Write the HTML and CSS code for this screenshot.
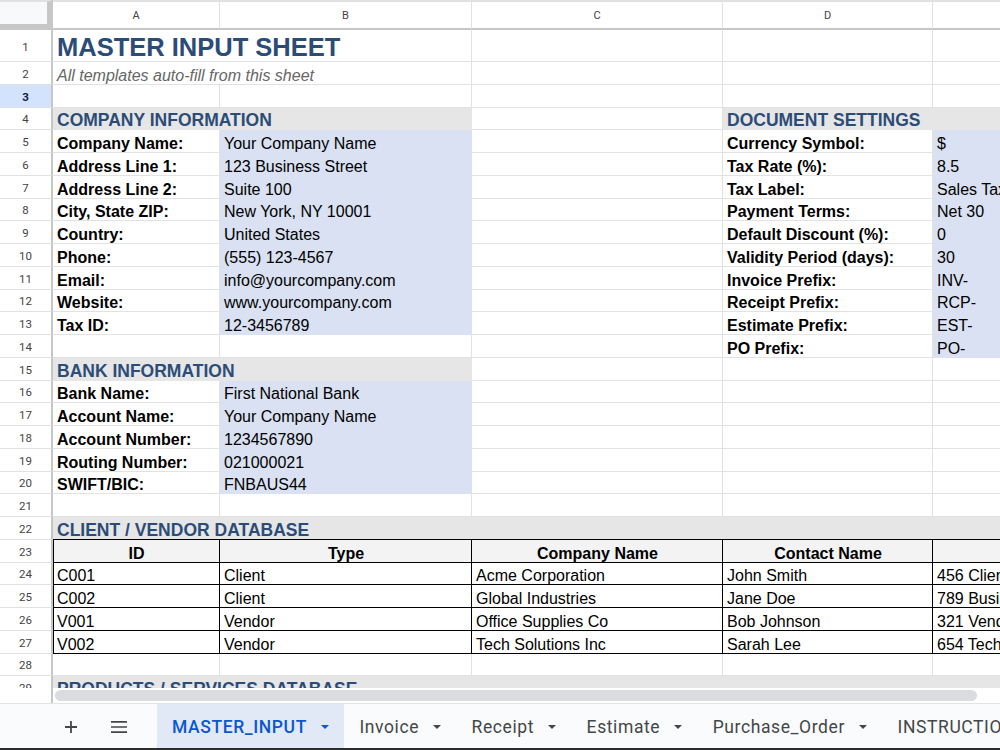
FILE: index.html
```html
<!DOCTYPE html>
<html lang="en">
<head>
  <meta charset="UTF-8">
  <title>MASTER_INPUT</title>
  <link rel="stylesheet" href="styles.css">
</head>
<body>
  <div class="app">
    <div class="sheet">
      <div class="row hdr">
        <div class="corner"></div>
        <div class="ch">A</div><div class="ch">B</div><div class="ch">C</div><div class="ch">D</div><div class="ch"></div>
      </div>
      <div class="row r1">
        <div class="rh">1</div>
        <div class="c span2 title">MASTER INPUT SHEET</div>
        <div class="c"></div><div class="c"></div><div class="c"></div>
      </div>
      <div class="row">
        <div class="rh">2</div>
        <div class="c span2 sub">All templates auto-fill from this sheet</div>
        <div class="c"></div><div class="c"></div><div class="c"></div>
      </div>
      <div class="row">
        <div class="rh sel">3</div>
        <div class="c"></div><div class="c"></div><div class="c"></div><div class="c"></div><div class="c"></div>
      </div>
      <div class="row">
        <div class="rh">4</div>
        <div class="c span2 sec">COMPANY INFORMATION</div>
        <div class="c"></div>
        <div class="c span2 sec">DOCUMENT SETTINGS</div>
      </div>
      <div class="row">
        <div class="rh">5</div>
        <div class="c lbl">Company Name:</div><div class="c val">Your Company Name</div><div class="c"></div>
        <div class="c lbl">Currency Symbol:</div><div class="c val">$</div>
      </div>
      <div class="row">
        <div class="rh">6</div>
        <div class="c lbl">Address Line 1:</div><div class="c val">123 Business Street</div><div class="c"></div>
        <div class="c lbl">Tax Rate (%):</div><div class="c val">8.5</div>
      </div>
      <div class="row">
        <div class="rh">7</div>
        <div class="c lbl">Address Line 2:</div><div class="c val">Suite 100</div><div class="c"></div>
        <div class="c lbl">Tax Label:</div><div class="c val">Sales Tax</div>
      </div>
      <div class="row">
        <div class="rh">8</div>
        <div class="c lbl">City, State ZIP:</div><div class="c val">New York, NY 10001</div><div class="c"></div>
        <div class="c lbl">Payment Terms:</div><div class="c val">Net 30</div>
      </div>
      <div class="row">
        <div class="rh">9</div>
        <div class="c lbl">Country:</div><div class="c val">United States</div><div class="c"></div>
        <div class="c lbl">Default Discount (%):</div><div class="c val">0</div>
      </div>
      <div class="row">
        <div class="rh">10</div>
        <div class="c lbl">Phone:</div><div class="c val">(555) 123-4567</div><div class="c"></div>
        <div class="c lbl">Validity Period (days):</div><div class="c val">30</div>
      </div>
      <div class="row">
        <div class="rh">11</div>
        <div class="c lbl">Email:</div><div class="c val">info@yourcompany.com</div><div class="c"></div>
        <div class="c lbl">Invoice Prefix:</div><div class="c val">INV-</div>
      </div>
      <div class="row">
        <div class="rh">12</div>
        <div class="c lbl">Website:</div><div class="c val">www.yourcompany.com</div><div class="c"></div>
        <div class="c lbl">Receipt Prefix:</div><div class="c val">RCP-</div>
      </div>
      <div class="row">
        <div class="rh">13</div>
        <div class="c lbl">Tax ID:</div><div class="c val">12-3456789</div><div class="c"></div>
        <div class="c lbl">Estimate Prefix:</div><div class="c val">EST-</div>
      </div>
      <div class="row">
        <div class="rh">14</div>
        <div class="c"></div><div class="c"></div><div class="c"></div>
        <div class="c lbl">PO Prefix:</div><div class="c val">PO-</div>
      </div>
      <div class="row">
        <div class="rh">15</div>
        <div class="c span2 sec">BANK INFORMATION</div>
        <div class="c"></div><div class="c"></div><div class="c"></div>
      </div>
      <div class="row">
        <div class="rh">16</div>
        <div class="c lbl">Bank Name:</div><div class="c val">First National Bank</div>
        <div class="c"></div><div class="c"></div><div class="c"></div>
      </div>
      <div class="row">
        <div class="rh">17</div>
        <div class="c lbl">Account Name:</div><div class="c val">Your Company Name</div>
        <div class="c"></div><div class="c"></div><div class="c"></div>
      </div>
      <div class="row">
        <div class="rh">18</div>
        <div class="c lbl">Account Number:</div><div class="c val">1234567890</div>
        <div class="c"></div><div class="c"></div><div class="c"></div>
      </div>
      <div class="row">
        <div class="rh">19</div>
        <div class="c lbl">Routing Number:</div><div class="c val">021000021</div>
        <div class="c"></div><div class="c"></div><div class="c"></div>
      </div>
      <div class="row">
        <div class="rh">20</div>
        <div class="c lbl">SWIFT/BIC:</div><div class="c val">FNBAUS44</div>
        <div class="c"></div><div class="c"></div><div class="c"></div>
      </div>
      <div class="row">
        <div class="rh">21</div>
        <div class="c"></div><div class="c"></div><div class="c"></div><div class="c"></div><div class="c"></div>
      </div>
      <div class="row">
        <div class="rh">22</div>
        <div class="c span5 sec tbl-top">CLIENT / VENDOR DATABASE</div>
      </div>
      <div class="row">
        <div class="rh">23</div>
        <div class="c tb th first">ID</div><div class="c tb th">Type</div><div class="c tb th">Company Name</div>
        <div class="c tb th">Contact Name</div><div class="c tb th"></div>
      </div>
      <div class="row">
        <div class="rh">24</div>
        <div class="c tb first">C001</div><div class="c tb">Client</div><div class="c tb">Acme Corporation</div>
        <div class="c tb">John Smith</div><div class="c tb">456 Client Avenue</div>
      </div>
      <div class="row">
        <div class="rh">25</div>
        <div class="c tb first">C002</div><div class="c tb">Client</div><div class="c tb">Global Industries</div>
        <div class="c tb">Jane Doe</div><div class="c tb">789 Business Blvd</div>
      </div>
      <div class="row">
        <div class="rh">26</div>
        <div class="c tb first">V001</div><div class="c tb">Vendor</div><div class="c tb">Office Supplies Co</div>
        <div class="c tb">Bob Johnson</div><div class="c tb">321 Vendor Street</div>
      </div>
      <div class="row">
        <div class="rh">27</div>
        <div class="c tb first">V002</div><div class="c tb">Vendor</div><div class="c tb">Tech Solutions Inc</div>
        <div class="c tb">Sarah Lee</div><div class="c tb">654 Tech Park</div>
      </div>
      <div class="row">
        <div class="rh">28</div>
        <div class="c"></div><div class="c"></div><div class="c"></div><div class="c"></div><div class="c"></div>
      </div>
      <div class="row">
        <div class="rh">29</div>
        <div class="c span5 sec">PRODUCTS / SERVICES DATABASE</div>
      </div>
    </div>

    <div class="hscroll">
      <div class="hs-left"></div>
      <div class="thumb"></div>
    </div>

    <div class="tabs">
      <div class="tbtn">
        <svg width="14" height="14" viewBox="0 0 14 14"><path d="M7 1v12M1 7h12" stroke="#444746" stroke-width="1.8" fill="none"/></svg>
      </div>
      <div class="tbtn menu">
        <svg width="18" height="14" viewBox="0 0 18 14"><path d="M1 1.8h16M1 7h16M1 12.2h16" stroke="#444746" stroke-width="1.7" fill="none"/></svg>
      </div>
      <div class="tab active">MASTER_INPUT <svg viewBox="0 0 8 4"><path d="M0 0h8L4 4z"/></svg></div>
      <div class="tab">Invoice <svg viewBox="0 0 8 4"><path d="M0 0h8L4 4z"/></svg></div>
      <div class="tab">Receipt <svg viewBox="0 0 8 4"><path d="M0 0h8L4 4z"/></svg></div>
      <div class="tab">Estimate <svg viewBox="0 0 8 4"><path d="M0 0h8L4 4z"/></svg></div>
      <div class="tab">Purchase_Order <svg viewBox="0 0 8 4"><path d="M0 0h8L4 4z"/></svg></div>
      <div class="tab">INSTRUCTIONS <svg viewBox="0 0 8 4"><path d="M0 0h8L4 4z"/></svg></div>
    </div>
  </div>
</body>
</html>
```

FILE: styles.css
```css
body {
  margin: 0;
  background: #fff;
  font-family: "Liberation Sans", Arial, sans-serif;
}
.app {
  width: 1000px;
  height: 750px;
  display: flex;
  flex-direction: column;
  overflow: hidden;
}
.sheet {
  flex: none;
  height: 688px;
  overflow: hidden;
}
.row {
  display: grid;
  grid-template-columns: 53px 167px 252px 251px 210px 220px;
  height: 22.75px;
}
.row > div {
  box-sizing: border-box;
  min-width: 0;
}
.row.hdr {
  height: 30px;
}
.row.r1 {
  height: 32px;
}

/* headers */
.corner {
  background: #f8f9fa;
  border-top: 2px solid #e1e1e1;
  border-right: 6px solid #c7c7c7;
  border-bottom: 6px solid #c7c7c7;
}
.ch {
  display: flex;
  align-items: center;
  justify-content: center;
  border-top: 2px solid #e1e1e1;
  border-right: 1px solid #e1e1e1;
  border-bottom: 2px solid #c4c7c5;
  font: 11px Roboto, sans-serif;
  color: #444;
}
.rh {
  display: flex;
  align-items: center;
  justify-content: center;
  padding-top: 2px;
  border-right: 2px solid #c4c7c5;
  border-bottom: 1px solid #e1e1e1;
  font: 11.5px Roboto, sans-serif;
  color: #444;
}
.rh.sel {
  background: #d3e3fd;
  color: #0b1f44;
  font-weight: 700;
}

/* cells */
.c {
  display: flex;
  align-items: flex-end;
  padding: 0 3px 0 4px;
  border-right: 1px solid #e2e2e2;
  border-bottom: 1px solid #e2e2e2;
  font-size: 16px;
  line-height: 16px;
  color: #000;
  white-space: nowrap;
  overflow: hidden;
}
.span2 {
  grid-column: span 2;
}
.span5 {
  grid-column: span 5;
}
.title {
  font-size: 25.5px;
  font-weight: 700;
  line-height: 27px;
  color: #2c4c78;
}
.sub {
  font-style: italic;
  color: #666;
}
.sec {
  background: #e6e6e6;
  border-color: #e6e6e6;
  padding-bottom: 1px;
  font-size: 17.5px;
  font-weight: 700;
  color: #2c4c78;
}
.lbl {
  font-weight: 700;
}
.val {
  background: #d9e1f2;
  border-color: #d9e1f2;
}
.tbl-top {
  border-bottom-color: #000;
}
.tb {
  border-right-color: #000;
  border-bottom-color: #000;
}
.tb.first {
  box-shadow: inset 1px 0 0 #000;
}
.th {
  justify-content: center;
  background: #f3f3f3;
  font-weight: 700;
}

/* scrollbar */
.hscroll {
  flex: none;
  height: 15px;
  display: flex;
  align-items: center;
  background: #fff;
}
.hs-left {
  width: 53px;
  height: 100%;
  box-sizing: border-box;
  border-right: 2px solid #c4c7c5;
}
.thumb {
  margin-left: 2px;
  width: 922px;
  height: 11px;
  border-radius: 6px;
  background: #dadce0;
}

/* sheet tabs */
.tabs {
  flex: none;
  height: 47px;
  box-sizing: border-box;
  display: flex;
  padding-left: 47px;
  background: #f9fbfd;
  border-top: 1px solid #e1e3e1;
  border-bottom: 2px solid #2d2d2d;
  font-family: Roboto, sans-serif;
  font-size: 17.5px;
  letter-spacing: 0.6px;
  color: #444746;
}
.tbtn {
  flex: none;
  width: 48px;
  display: flex;
  align-items: center;
  justify-content: center;
  padding-top: 2px;
}
.tbtn.menu {
  margin-right: 14px;
}
.tab {
  flex: none;
  display: flex;
  align-items: center;
  gap: 14px;
  padding: 2px 15.5px 0 15px;
  white-space: nowrap;
}
.tab svg {
  width: 8px;
  height: 4px;
  fill: #444746;
}
.tab.active {
  background: #e1e9f7;
  color: #0b57d0;
  font-weight: 500;
}
.tab.active svg {
  fill: #0b57d0;
}
```
